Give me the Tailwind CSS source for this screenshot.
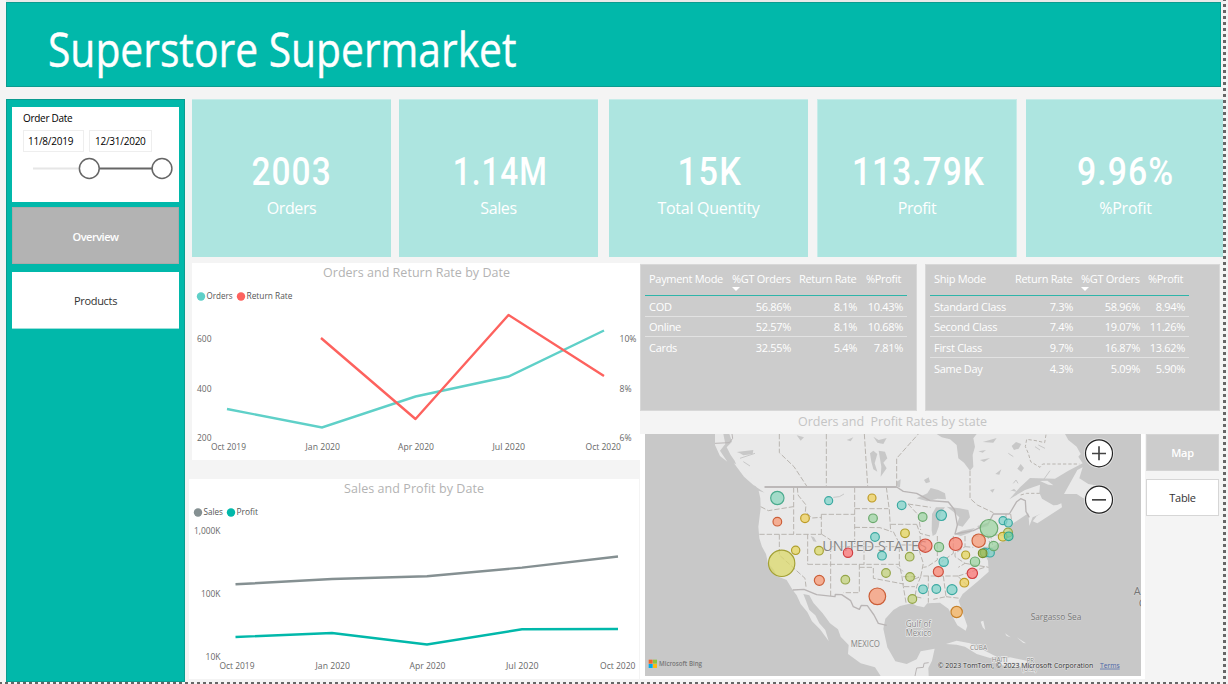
<!DOCTYPE html>
<html lang="en">
<head>
<meta charset="utf-8">
<title>Superstore Supermarket</title>
<script src="https://cdn.jsdelivr.net/npm/@tailwindcss/browser@4"></script>
</head>
<body class="relative h-[684px] w-[1228px] overflow-hidden bg-[#f4f4f4] font-['Open_Sans','Noto_Sans',sans-serif]">
<div class="flex h-[684px] w-[1223px] flex-col pl-[6px]">
  <div class="h-[2px] bg-[#e9e9e9]"></div>
  <header class="flex h-[85px] w-[1215px] items-center border border-[#0b9c90] bg-[#01b8aa] pl-[41px]">
    <h1 class="inline-block origin-left scale-x-[0.868] pt-[10px] text-[47px] leading-none whitespace-nowrap text-white [-webkit-text-stroke:0.4px_white]">Superstore Supermarket</h1>
  </header>
  <div class="mt-[12px] flex h-[583px]">
    <!-- Sidebar -->
    <aside class="flex w-[179px] shrink-0 flex-col border border-[#0b9c90] bg-[#01b8aa] px-[5px] pt-[7px]">
      <div class="h-[95px] bg-white pt-[5px] pl-[11px]">
        <div class="text-[10px] leading-[13px] tracking-[-0.3px] text-black">Order Date</div>
        <div class="mt-[5px] flex gap-[5px] text-[10px] tracking-[-0.25px] text-black">
          <div class="flex h-[22px] w-[61px] items-center border border-[#eeeeee] pl-[4px]">11/8/2019</div>
          <div class="flex h-[22px] w-[63px] items-center border border-[#eeeeee] pl-[5px]">12/31/2020</div>
        </div>
        <svg class="mt-[5px] block" width="156" height="24" viewBox="23 157 156 24" fill="none">
          <path d="M33 168.500H80" stroke="#e6e6e6" stroke-width="2"/>
          <path d="M98 168.500H153" stroke="#666" stroke-width="2"/>
          <circle cx="89.300" cy="168.500" r="9.900" fill="#fff" stroke="#666" stroke-width="1.500"/>
          <circle cx="162" cy="168.500" r="9.900" fill="#fff" stroke="#666" stroke-width="1.500"/>
        </svg>
      </div>
      <div class="mt-[5px] flex h-[57px] items-center justify-center border border-[#aaaaaa] bg-[#b3b3b3] pt-[3px] text-[11px] font-semibold tracking-[-0.5px] text-white">Overview</div>
      <div class="mt-[8px] flex h-[57px] items-center justify-center border-b border-[#9be0da] bg-white pt-[2px] text-[11px] tracking-[-0.3px] text-[#333]">Products</div>
    </aside>

    <main class="ml-[4px] flex w-[1034px] shrink-0 flex-col">
      <!-- Key figures -->
      <section class="flex h-[158px] pl-[3px] text-center text-white">
        <div class="w-[199px] border-t border-[#c6ece9] bg-[#ade5e0] pt-[50px]"><div class="font-[Roboto] text-[38px] leading-[44px] font-medium"><span class="inline-block scale-x-[0.88] tracking-[1.2px]">2003</span></div><div class="mt-[3px] text-[16px] leading-[22px] tracking-[-0.4px]">Orders</div></div>
        <div class="ml-[8px] w-[199px] border-t border-[#c6ece9] bg-[#ade5e0] pt-[50px]"><div class="pl-[3px] font-[Roboto] text-[38px] leading-[44px] font-medium"><span class="inline-block scale-x-[0.83] tracking-[1.2px]">1.14M</span></div><div class="mt-[3px] text-[16px] leading-[22px] tracking-[-0.4px]">Sales</div></div>
        <div class="ml-[11px] w-[199px] border-t border-[#c6ece9] bg-[#ade5e0] pt-[50px]"><div class="pl-[4px] font-[Roboto] text-[38px] leading-[44px] font-medium"><span class="inline-block scale-x-[0.9] tracking-[1.600px]">15K</span></div><div class="mt-[3px] text-[16px] leading-[22px] tracking-[-0.25px]">Total Quentity</div></div>
        <div class="ml-[9px] w-[200px] border-x border-t border-[#c6ece9] bg-[#ade5e0] pt-[50px]"><div class="pl-[2px] font-[Roboto] text-[38px] leading-[44px] font-medium"><span class="inline-block scale-x-[0.88] tracking-[1.2px]">113.79K</span></div><div class="mt-[3px] text-[16px] leading-[22px] tracking-[-0.4px]">Profit</div></div>
        <div class="ml-[9px] w-[197px] border-t border-[#c6ece9] bg-[#ade5e0] pt-[50px]"><div class="pl-[3px] font-[Roboto] text-[38px] leading-[44px] font-medium"><span class="inline-block scale-x-[0.89] tracking-[1.2px]">9.96%</span></div><div class="mt-[3px] pl-[2px] text-[16px] leading-[22px] tracking-[-0.2px]">%Profit</div></div>
      </section>

      <div class="mt-[6px] flex">
        <!-- Charts -->
        <section class="w-[451px] shrink-0">
          <svg class="ml-[3px] block bg-white" width="448" height="197" viewBox="192 263 448 197" fill="none">
            <text x="323" y="277" font-size="12.500" textLength="187" fill="#b3b3b3">Orders and Return Rate by Date</text>
            <circle cx="201" cy="296.500" r="4.200" fill="#5fd0c8"/><circle cx="241" cy="296.500" r="4.200" fill="#fd625e"/>
            <g font-size="9.800" fill="#555"><text x="206.500" y="299" textLength="26" lengthAdjust="spacingAndGlyphs">Orders</text><text x="246.500" y="299" textLength="46" lengthAdjust="spacingAndGlyphs">Return Rate</text></g>
            <g font-size="9.800" fill="#686868">
              <text x="197" y="342" textLength="14.500" lengthAdjust="spacingAndGlyphs">600</text><text x="197" y="392" textLength="14.500" lengthAdjust="spacingAndGlyphs">400</text><text x="197" y="441" textLength="14.500" lengthAdjust="spacingAndGlyphs">200</text>
              <text x="619.500" y="342" textLength="17" lengthAdjust="spacingAndGlyphs">10%</text><text x="619.500" y="392" textLength="12" lengthAdjust="spacingAndGlyphs">8%</text><text x="619.500" y="441" textLength="12" lengthAdjust="spacingAndGlyphs">6%</text>
              <text x="211" y="450" textLength="35" lengthAdjust="spacingAndGlyphs">Oct 2019</text><text x="305.500" y="450" textLength="34.500" lengthAdjust="spacingAndGlyphs">Jan 2020</text><text x="398" y="450" textLength="36" lengthAdjust="spacingAndGlyphs">Apr 2020</text><text x="492.500" y="450" textLength="32.500" lengthAdjust="spacingAndGlyphs">Jul 2020</text><text x="585.500" y="450" textLength="35.500" lengthAdjust="spacingAndGlyphs">Oct 2020</text>
            </g>
            <path d="M227 409L322 427.500L415.500 396.500L508.500 376.500L604 330.500" stroke="#5fd0c8" stroke-width="2.400"/>
            <path d="M321 338L415.500 419L508.500 315L604 376" stroke="#fd625e" stroke-width="2.400" stroke-linejoin="round"/>
          </svg>
          <svg class="mt-[19px] block bg-white" width="450" height="200" viewBox="189 479 450 200" fill="none">
            <text x="344" y="493" font-size="12.500" textLength="140" fill="#b3b3b3">Sales and Profit by Date</text>
            <circle cx="198" cy="512.500" r="4.200" fill="#859092"/><circle cx="231" cy="512.500" r="4.200" fill="#01b8aa"/>
            <g font-size="9.800" fill="#555"><text x="203.500" y="515" textLength="19.500" lengthAdjust="spacingAndGlyphs">Sales</text><text x="236.500" y="515" textLength="21.500" lengthAdjust="spacingAndGlyphs">Profit</text></g>
            <g font-size="9.800" fill="#686868">
              <text x="194" y="534" textLength="26.500" lengthAdjust="spacingAndGlyphs">1,000K</text><text x="201" y="597" textLength="19.500" lengthAdjust="spacingAndGlyphs">100K</text><text x="205.500" y="660" textLength="15" lengthAdjust="spacingAndGlyphs">10K</text>
              <text x="219.500" y="669" textLength="35" lengthAdjust="spacingAndGlyphs">Oct 2019</text><text x="315.500" y="669" textLength="34.500" lengthAdjust="spacingAndGlyphs">Jan 2020</text><text x="409.500" y="669" textLength="36" lengthAdjust="spacingAndGlyphs">Apr 2020</text><text x="506" y="669" textLength="32.500" lengthAdjust="spacingAndGlyphs">Jul 2020</text><text x="600" y="669" textLength="35.500" lengthAdjust="spacingAndGlyphs">Oct 2020</text>
            </g>
            <path d="M235.500 584.300L332 579L427 576.300L522 567.600L618 556.500" stroke="#859092" stroke-width="2.400"/>
            <path d="M235.500 637L332 633L427 644.500L522 629.300L618 629" stroke="#01b8aa" stroke-width="2.400"/>
          </svg>
        </section>

        <section class="w-[583px] shrink-0">
          <!-- Tables -->
          <div class="flex gap-[8px] pt-px text-[11px] tracking-[-0.3px] text-white">
            <div class="h-[147px] w-[277px] border border-[#d8d8d8] bg-[#cccccc] pt-[4px] pl-[4px]">
              <div class="w-[262px]">
                <div class="grid h-[27px] grid-cols-[83px_67px_66px_46px] border-b border-[#2eb5aa] pt-[2px] leading-[15px]">
                  <div class="pl-[4px]">Payment Mode</div>
                  <div class="pl-[4px]">%GT Orders<svg class="mt-px block" width="8" height="4" viewBox="0 0 8 4"><path d="M0 0h8L4 4z" fill="#fff"/></svg></div>
                  <div class="pl-[4px]">Return Rate</div><div class="pl-[5px]">%Profit</div>
                </div>
                <div class="grid h-[21px] grid-cols-[83px_67px_66px_46px] items-center border-b border-[#e2e2e2] pt-[2px] text-right"><div class="pl-[4px] text-left">COD</div><div class="pr-[4px]">56.86%</div><div class="pr-[4px]">8.1%</div><div class="pr-[4px]">10.43%</div></div>
                <div class="grid h-[20px] grid-cols-[83px_67px_66px_46px] items-center border-b border-[#e2e2e2] pt-[2px] text-right"><div class="pl-[4px] text-left">Online</div><div class="pr-[4px]">52.57%</div><div class="pr-[4px]">8.1%</div><div class="pr-[4px]">10.68%</div></div>
                <div class="grid h-[21px] grid-cols-[83px_67px_66px_46px] items-center pt-px text-right"><div class="pl-[4px] text-left">Cards</div><div class="pr-[4px]">32.55%</div><div class="pr-[4px]">5.4%</div><div class="pr-[4px]">7.81%</div></div>
              </div>
            </div>
            <div class="h-[147px] w-[295px] border border-[#d8d8d8] bg-[#cccccc] pt-[4px] pl-[4px]">
              <div class="w-[259px]">
                <div class="grid h-[27px] grid-cols-[81px_66px_67px_45px] border-b border-[#2eb5aa] pt-[2px] leading-[15px]">
                  <div class="pl-[4px]">Ship Mode</div><div class="pl-[4px]">Return Rate</div>
                  <div class="pl-[4px]">%GT Orders<svg class="mt-px block" width="8" height="4" viewBox="0 0 8 4"><path d="M0 0h8L4 4z" fill="#fff"/></svg></div>
                  <div class="pl-[4px]">%Profit</div>
                </div>
                <div class="grid h-[21px] grid-cols-[81px_62px_67px_49px] items-center border-b border-[#e2e2e2] pt-[2px] text-right"><div class="pl-[4px] text-left whitespace-nowrap">Standard Class</div><div>7.3%</div><div>58.96%</div><div class="pr-[4px]">8.94%</div></div>
                <div class="grid h-[20px] grid-cols-[81px_62px_67px_49px] items-center border-b border-[#e2e2e2] pt-[2px] text-right"><div class="pl-[4px] text-left">Second Class</div><div>7.4%</div><div>19.07%</div><div class="pr-[4px]">11.26%</div></div>
                <div class="grid h-[21px] grid-cols-[81px_62px_67px_49px] items-center border-b border-[#e2e2e2] pt-[2px] text-right"><div class="pl-[4px] text-left">First Class</div><div>9.7%</div><div>16.87%</div><div class="pr-[4px]">13.62%</div></div>
                <div class="grid h-[21px] grid-cols-[81px_62px_67px_49px] items-center pt-px text-right"><div class="pl-[4px] text-left">Same Day</div><div>4.3%</div><div>5.09%</div><div class="pr-[4px]">5.90%</div></div>
              </div>
            </div>
          </div>
          <h2 class="h-[23px] pl-[158px] text-[12.500px] leading-[21px] whitespace-pre text-[#c4c4c4]">Orders and  Profit Rates by state</h2>
          <div class="flex">
            <div class="h-[245px] w-[505px] bg-white pl-[5px]">
              <svg class="block" width="496" height="242" viewBox="15 12 1488 726" fill="none">
                <rect x="15" y="12" width="1488" height="726" fill="#c8c8c8"/>
                <!-- Land -->
                <g fill="#e9e9e9">
                  <path d="M268 12L276 35L260 52L272 75L284 92L292 112L315 138L338 152L350 172L374 188L356 182L361 205L362 235L355 290L358 325L366 350L378 372L384 400L402 420L410 438L440 450L458 480L470 496L482 522L502 546L516 574L540 598L566 633L556 600L538 580L526 556L508 540L498 512L490 492L508 496L520 518L548 550L570 580L594 598L602 620L626 645L624 672L662 700L705 712L722 738L866 738L865 714L876 692L884 656L842 664L830 688L800 702L766 694L742 652L730 596L736 566L760 540L780 528L815 520L830 527L852 532L862 520L900 518L925 536L938 560L952 586L977 602L982 588L966 542L956 512L968 492L1012 455L1046 425L1044 392L1034 372L1056 352L1078 338L1116 322L1106 300L1112 284L1138 268L1165 250L1168 288L1178 262L1210 248L1238 236L1262 225L1240 226L1206 206L1198 188L1200 164L1155 180L1108 208L1140 172L1170 144L1245 146L1285 122L1328 100L1315 80L1322 72L1310 50L1285 30L1275 12Z"/>
                  <path d="M225 12L250 12L256 42L240 62L262 95L240 78L225 45Z"/>
                  <path d="M282 100L308 112L320 138L350 155L364 178L340 165L312 140Z"/>
                  <path d="M1178 274L1190 258L1225 236L1264 220L1266 232L1235 252L1192 280Z"/>
                  <path d="M1272 192L1290 160L1312 120L1328 112L1318 145L1345 162L1378 168L1400 185L1400 208L1370 198L1330 205L1310 192Z"/>
                  <path d="M1200 153L1222 152L1240 166L1225 164Z"/>
                  <path d="M918 642L950 632L990 640L1030 660L1070 680L1050 684L1010 672L975 650L950 644Z"/>
                  <path d="M1065 690L1110 682L1160 692L1172 706L1130 712L1075 704Z"/>
                  <path d="M1015 700L1040 702L1034 708ZM1185 704L1206 704L1202 709L1185 708Z"/>
                  <path d="M1022 575L1030 572L1036 600L1028 592ZM1095 610L1112 622L1100 618ZM1130 622L1158 640L1150 639Z"/>
                </g>
                <!-- Lakes and bays -->
                <g fill="#c8c8c8">
                  <path d="M890 12L1010 12L1000 25L1005 50L998 75L1000 110L990 122L972 98L955 85L950 45L930 28L905 22Z"/>
                  <path d="M830 205L862 190L872 174L895 180L915 190L918 208L892 206L862 214Z"/>
                  <path d="M875 300L876 252L888 232L915 232L902 250L896 290L888 312L878 318Z"/>
                  <path d="M920 230L958 235L985 240L990 262L968 290L950 285L958 262L940 245Z"/>
                  <path d="M944 312L965 302L1005 294L990 308L962 318ZM1012 288L1048 276L1045 288L1016 296Z"/>
                  <path d="M690 70L700 62L712 72L704 100L712 125L700 118L694 95ZM716 62L735 65L742 85L730 98L740 115L722 140L724 110Z"/>
                  <path d="M770 155L782 148L780 172L772 170ZM852 150L866 142L870 156L858 160ZM1050 180L1064 176L1058 188ZM1066 132L1084 118L1078 134ZM1115 48L1128 36L1144 42L1136 56L1122 60ZM1132 116L1142 102L1152 114L1144 126ZM1028 36L1070 24L1060 38ZM1015 64L1038 60L1028 68ZM1020 90L1050 84L1032 96ZM1110 184L1122 176L1132 186L1116 182Z"/>
                  <path d="M290 66L340 60L338 72L310 76L300 70ZM470 16L492 22L482 32ZM620 30L640 22L632 34ZM512 318L522 322L530 336L520 334ZM700 20L716 30L740 24L730 42L712 38Z"/>
                </g>
                <g stroke="#c8c8c8" stroke-width="3">
                  <path d="M300 85L345 70M310 95L330 108M580 202L598 200L612 192M1195 45L1215 55M1200 60L1185 50M1105 70L1120 80M1210 150L1230 122M770 410L790 424M1120 160L1128 150L1134 160"/>
                </g>
                <!-- Country borders -->
                <g stroke="#b9b5b5" stroke-width="5" stroke-linejoin="round">
                  <path d="M374 171H770L790 184L830 190L870 212L925 216L944 240L952 285L945 312L1000 302L1045 280L1060 252L1108 252L1130 215L1142 206L1156 212L1158 245L1168 262" stroke-width="4"/>
                  <path d="M374 171H770"/>
                  <path d="M458 480L492 478L530 494L585 500L586 493L605 494L632 512L640 530L658 538L664 526L682 527L702 555L715 580L740 586" stroke-width="4"/>
                  <path d="M225 40L268 38L278 25L276 12M825 738L830 714L850 712L852 700L866 698" stroke-width="3"/>
                </g>
                <!-- State and province borders -->
                <g stroke="#b9b5b0" stroke-width="3" stroke-dasharray="16 6">
                  <path d="M418 12V68L462 110L500 168M559 12V168M673 12L683 168M770 168V85L835 12M990 122V205L1012 225L1060 248"/>
                  <path d="M362 230L385 242L460 230M461 172V312M358 313H544M544 253V312M472 172L474 195L498 225L496 245L516 264L544 262M544 253H644M644 172V350M644 236H745M644 292L720 293L755 305M739 172L748 240L752 305M752 283H830M544 312L572 330V350M503 312V403M418 313V375L495 445L498 470M503 403H778M572 350V500M572 350H778M672 330V403M658 403V488H610M658 412L700 412V445L780 460L792 462"/>
                  <path d="M778 350V403L786 440L790 470L798 518M760 305L778 340M830 283L840 310L870 318M804 222L835 255L842 300M840 318L842 350M782 345H832L850 400L842 440L810 452M892 318V390L862 410L850 412M790 440H835M842 440L830 470L825 500L850 505M850 438H955M955 438L1040 410M865 438V518M910 438L918 500L880 508M918 500L960 505M940 318V370L905 395M975 318V350L945 370L945 380L975 400L955 412M975 350L1000 352M975 400L1046 412M1000 318H1052L1058 345M1040 312L1050 340M955 440L985 470M804 222L872 232M1058 315H1090M1098 252V290M1112 252L1116 280M792 470H825M1030 352H1055"/>
                  <path d="M1218 14L1214 38L1188 32L1160 28L1156 50L1165 70L1172 95L1200 112L1208 102H1318" stroke-dasharray="10 6"/>
                  <path d="M1142 195L1160 190H1200" stroke-dasharray="10 6"/>
                </g>
                <!-- Place names -->
                <g fill="#858585" stroke="#ececec" stroke-width="4" paint-order="stroke" stroke-linejoin="round">
                  <text x="547" y="362" font-size="44" textLength="314" lengthAdjust="spacingAndGlyphs">UNITED STATES</text>
                  <text x="632" y="651" font-size="25" textLength="88" lengthAdjust="spacingAndGlyphs">MEXICO</text>
                  <text x="797" y="591" font-size="25" textLength="76" lengthAdjust="spacingAndGlyphs">Gulf of</text>
                  <text x="797" y="617" font-size="25" textLength="78" lengthAdjust="spacingAndGlyphs">Mexico</text>
                  <text x="990" y="660" font-size="21" textLength="51" lengthAdjust="spacingAndGlyphs">CUBA</text>
                  <text x="1055" y="696" font-size="21" textLength="48" lengthAdjust="spacingAndGlyphs">HAITI</text>
                  <text x="1160" y="699" font-size="21" textLength="22" lengthAdjust="spacingAndGlyphs">PR</text>
                  <text x="1146" y="723" font-size="20" textLength="44" lengthAdjust="spacingAndGlyphs">(U.S.)</text>
                </g>
                <g fill="#757575" stroke="#d6d6d6" stroke-width="3" paint-order="stroke">
                  <text x="1172" y="570" font-size="25" textLength="152" lengthAdjust="spacingAndGlyphs">Sargasso Sea</text>
                  <text x="1481" y="496" font-size="33">A</text>
                  <text x="1496" y="531" font-size="33">C</text>
                </g>
                <!-- State bubbles -->
                <g stroke-width="3.500" fill-opacity=".75">
                  <g class="fill-[#80d3c9] stroke-[#3aa9a1]"><circle cx="566" cy="212" r="12"/><circle cx="705" cy="321" r="13"/><circle cx="726" cy="377" r="13"/><circle cx="785" cy="226" r="13"/><circle cx="904" cy="256" r="15.500"/><circle cx="1089" cy="272" r="12"/><circle cx="1105" cy="279" r="12"/><circle cx="911" cy="395" r="14"/><circle cx="849" cy="478" r="13"/><circle cx="889" cy="477" r="13"/><circle cx="936" cy="479" r="15"/><circle cx="1034" cy="368" r="13"/><circle cx="1050" cy="368" r="13"/></g>
                  <circle cx="412" cy="204" r="20" class="fill-[#8bd6be] stroke-[#4bab8e]"/>
                  <g class="fill-[#9dd4a3] stroke-[#6aa96d]"><circle cx="699" cy="265" r="13"/><circle cx="848" cy="261" r="13"/><circle cx="897" cy="351" r="14"/><circle cx="1047" cy="295" r="26.500"/><circle cx="1061" cy="348" r="14"/><circle cx="1005" cy="395" r="14"/></g>
                  <g class="fill-[#c3d27c] stroke-[#94a548]"><circle cx="738" cy="429" r="13"/><circle cx="616" cy="449" r="13"/><circle cx="809" cy="380" r="13"/><circle cx="810" cy="441" r="13"/><circle cx="817" cy="507" r="13"/><circle cx="1104" cy="308" r="13.500"/></g>
                  <g class="fill-[#dbd869] stroke-[#a3a034]"><circle cx="425" cy="400" r="39.500"/><circle cx="537" cy="362" r="13"/></g>
                  <g class="fill-[#eed05c] stroke-[#bd9a24]"><circle cx="495" cy="265" r="13"/><circle cx="696" cy="204" r="12"/><circle cx="973" cy="458" r="13"/></g>
                  <g class="fill-[#e6d65e] stroke-[#b09f2a]"><circle cx="467" cy="361" r="12.500"/><circle cx="795" cy="310" r="13"/><circle cx="1088" cy="320" r="13"/><circle cx="977" cy="375" r="12"/></g>
                  <circle cx="1106" cy="319" r="13" class="fill-[#68c9a3] stroke-[#2fa591]"/>
                  <circle cx="1028" cy="370" r="13" class="fill-[#a4b744] stroke-[#788c2c]"/>
                  <circle cx="950" cy="546" r="17" class="fill-[#f3b05c] stroke-[#c6812a]"/>
                  <g class="fill-[#f79a75] stroke-[#cb5e37]"><circle cx="412" cy="275" r="13"/><circle cx="538" cy="451" r="15"/><circle cx="712" cy="499" r="25"/><circle cx="1016" cy="332" r="20"/></g>
                  <g class="fill-[#f98672] stroke-[#cd4f3d]"><circle cx="856" cy="347" r="20"/><circle cx="947" cy="342" r="19.500"/><circle cx="895" cy="425" r="15"/></g>
                  <g class="fill-[#fb7474] stroke-[#d13d40]"><circle cx="624" cy="368" r="14"/><circle cx="997" cy="430" r="15.500"/></g>
                </g>
                <!-- Zoom buttons -->
                <circle cx="1377" cy="70" r="45" fill="#e2e2e2"/><circle cx="1377" cy="70" r="40.500" fill="#fff" stroke="#222" stroke-width="3.500"/>
                <path d="M1356 70.500H1398M1377 49V91" stroke="#444" stroke-width="5"/>
                <circle cx="1377" cy="209" r="45" fill="#e2e2e2"/><circle cx="1377" cy="209" r="40.500" fill="#fff" stroke="#222" stroke-width="3.500"/>
                <path d="M1356 209.500H1398" stroke="#444" stroke-width="5"/>
                <!-- Attribution -->
                <path d="M26 689h12v12h-12z" fill="#f1652a"/><path d="M39 689h12v12h-12z" fill="#8dc63f"/><path d="M26 702h12v12h-12z" fill="#00adef"/><path d="M39 702h12v12h-12z" fill="#fdb813"/>
                <text x="57" y="709" font-size="21" font-weight="600" textLength="129" lengthAdjust="spacingAndGlyphs" fill="#777">Microsoft Bing</text>
                <text x="893" y="713" font-size="21" textLength="467" lengthAdjust="spacingAndGlyphs" fill="#333" stroke="#dedede" stroke-width="3" paint-order="stroke">© 2023 TomTom, © 2023 Microsoft Corporation</text>
                <text x="1380" y="713" font-size="21" textLength="59" lengthAdjust="spacingAndGlyphs" fill="#4a66a8" text-decoration="underline">Terms</text>
              </svg>
            </div>
            <div class="ml-px w-[73px] text-center text-[11px]">
              <div class="h-[37px] border border-[#d4d4d4] bg-[#cccccc] leading-[35px] font-semibold tracking-[-0.3px] text-white">Map</div>
              <div class="mt-[8px] h-[37px] border border-[#d6d6d6] bg-white leading-[35px] tracking-[-0.3px] text-[#333]">Table</div>
            </div>
          </div>
        </section>
      </div>
    </main>
  </div>
</div>
<!-- Dotted page boundary -->
<div class="absolute top-0 left-[1223px] h-[684px] w-[3px] bg-[linear-gradient(to_bottom,#666_0_3px,#f4f4f4_3px_6px)] bg-[length:3px_6px] bg-[position:0_4px]"></div>
<div class="absolute top-[682px] left-0 h-[2px] w-[1226px] bg-[linear-gradient(to_right,#666_0_3px,#f4f4f4_3px_6px)] bg-[length:6px_2px] bg-[position:-1px_0]"></div>
</body>
</html>
